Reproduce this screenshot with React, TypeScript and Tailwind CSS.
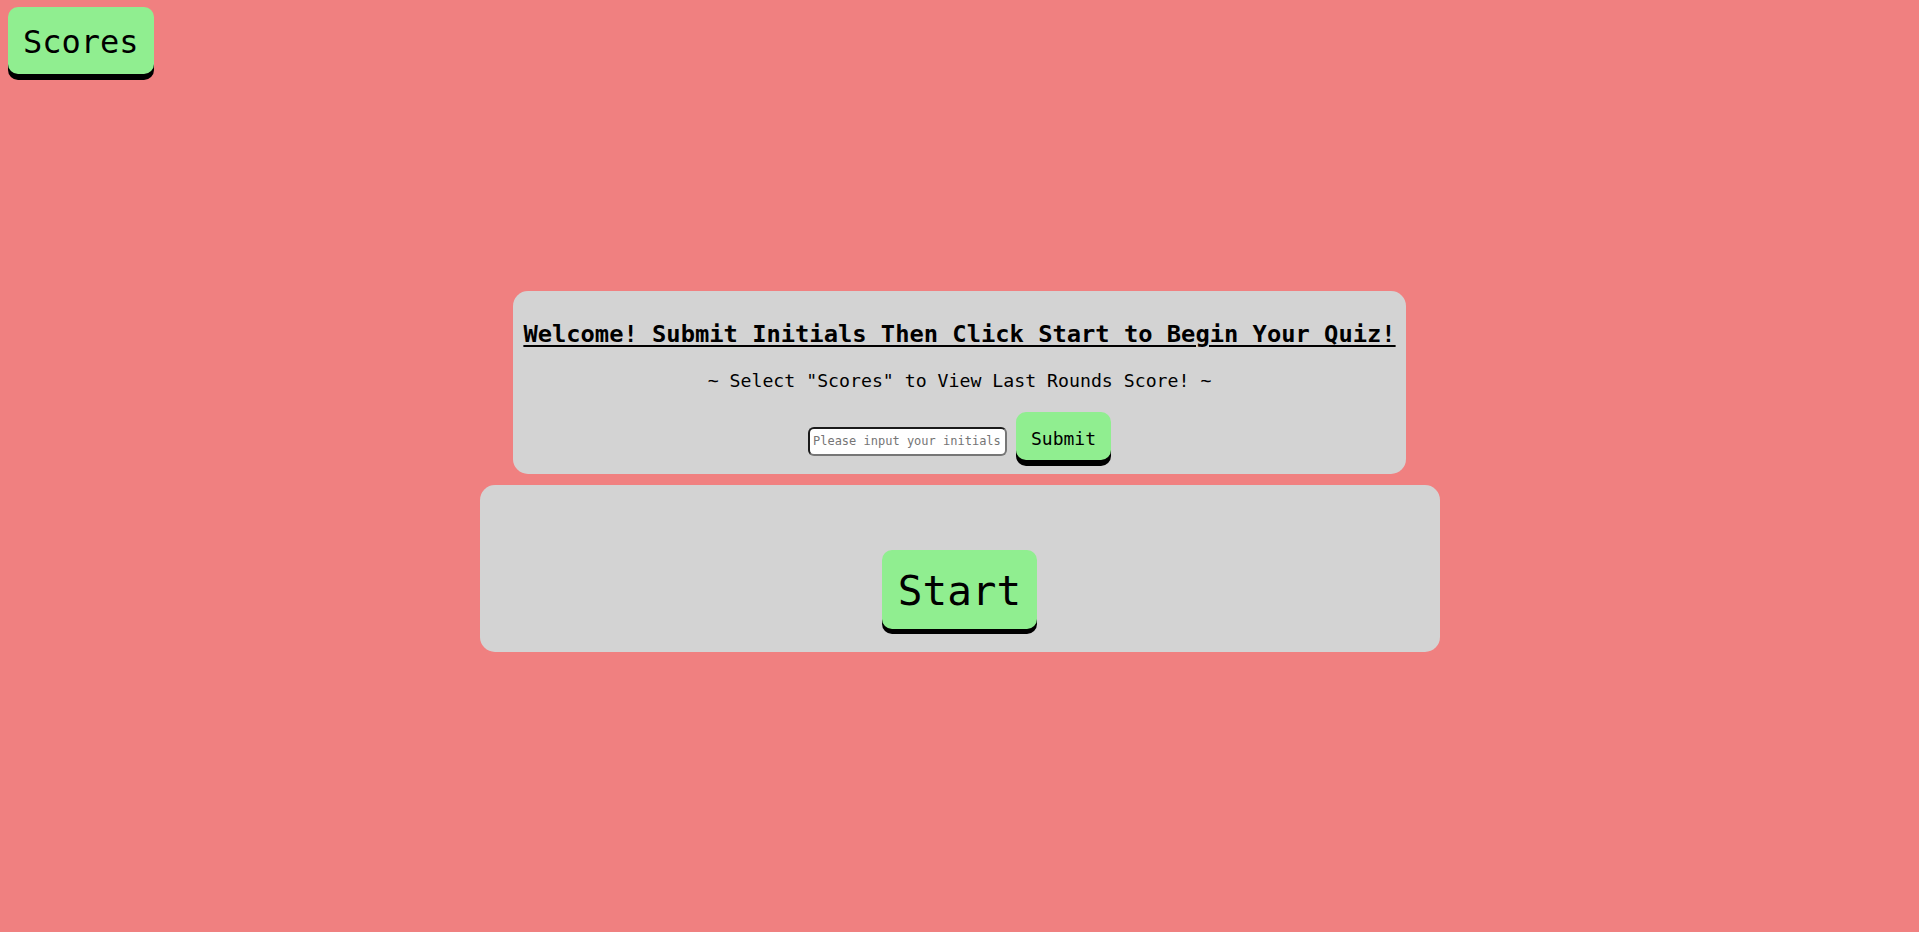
import { useState } from 'react';

const mono = "font-['DejaVu_Sans_Mono',monospace]";

export default function App() {
    const [initials, setInitials] = useState('');

    return (
        <div className={`min-h-screen bg-[#f08080] pt-[7px] text-black ${mono}`}>
            <button className="ml-2 rounded-[10px] bg-[#90ee90] px-[15px] pt-[17px] pb-[13px] text-[32px] leading-[37px] shadow-[0_6px_0_#000]">
                Scores
            </button>

            <main className="mt-[217px] flex flex-col items-center gap-[11px]">
                <section className="flex flex-col items-center rounded-[15px] bg-[#d3d3d3] px-[10px] pt-[29px] pb-[14px]">
                    <h2 className="text-[23.75px] leading-[28px] font-bold underline underline-offset-[3px]">
                        Welcome! Submit Initials Then Click Start to Begin Your Quiz!
                    </h2>
                    <p className="mt-[22px] text-[18.2px] leading-[21px]">
                        ~ Select "Scores" to View Last Rounds Score! ~
                    </p>
                    <div className="mt-[21px] flex items-baseline gap-[9px]">
                        <input
                            value={initials}
                            onChange={(e) => setInitials(e.target.value)}
                            placeholder="Please input your initials"
                            className="h-[29px] w-[199px] rounded-[6px] border-2 border-t-[#1a1a1a] border-l-[#1a1a1a] border-b-[#767676] border-r-[#767676] bg-white px-[3px] text-[12px] placeholder:text-[#757575] outline-none"
                        />
                        <button className="rounded-[10px] bg-[#90ee90] px-[15px] pt-[16px] pb-[10px] text-[18px] leading-[22px] shadow-[0_6px_0_#000]">
                            Submit
                        </button>
                    </div>
                </section>

                <section className="flex w-[960px] justify-center rounded-[15px] bg-[#d3d3d3] pt-[65px] pb-[23px]">
                    <button className="rounded-[10px] bg-[#90ee90] px-4 pt-[18px] pb-[14px] text-[41px] leading-[47px] shadow-[0_5px_0_#000]">
                        Start
                    </button>
                </section>
            </main>
        </div>
    );
}
